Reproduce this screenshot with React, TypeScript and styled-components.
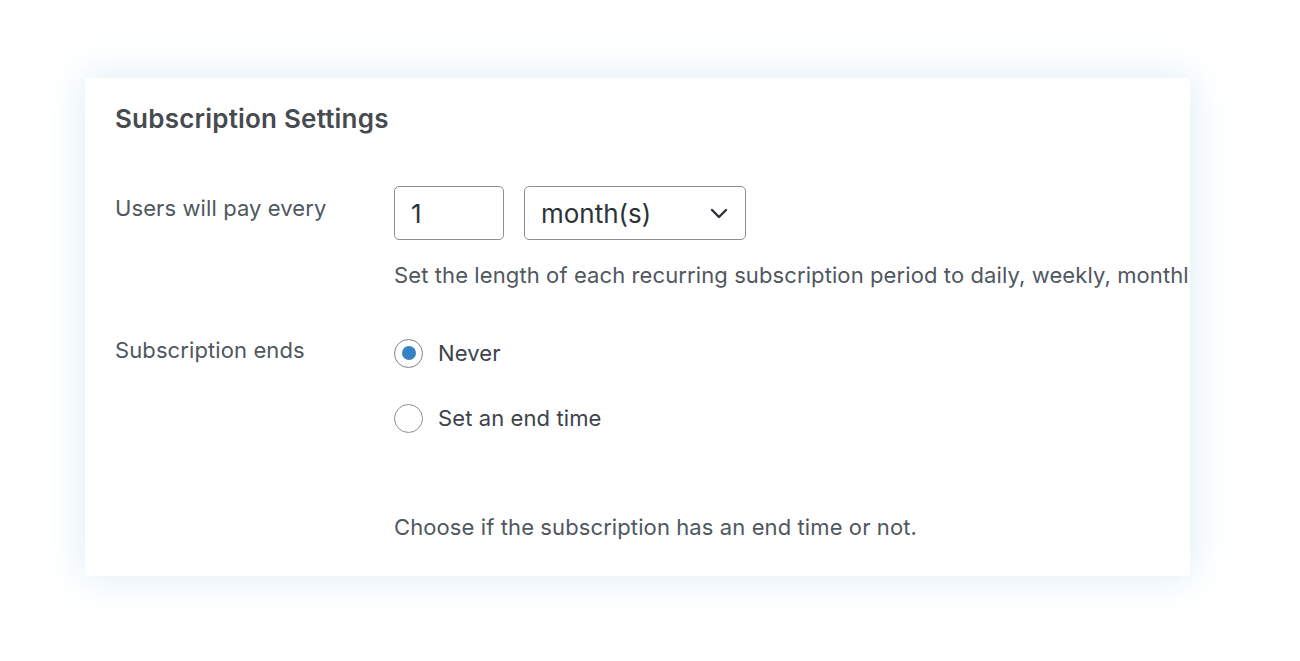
import styled, { createGlobalStyle } from "styled-components";

const Global = createGlobalStyle`
    html, body {
        margin: 0;
        padding: 0;
        background: #ffffff;
    }
    body {
        font-family: Inter, "Open Sans", "Liberation Sans", sans-serif;
        color: #3c434a;
    }
`;

const Page = styled.div`
    width: 1300px;
    height: 661px;
    padding: 78px 0 0 85px;
    box-sizing: border-box;
`;

const Card = styled.section`
    width: 1105px;
    height: 498px;
    box-sizing: border-box;
    background: #fff;
    padding: 23px 0 0 30px;
    overflow: hidden;
    box-shadow: 0 0 36px rgba(120, 190, 220, 0.28);
`;

const Title = styled.h2`
    margin: 0 0 49px;
    font-size: 26px;
    line-height: 36px;
    font-weight: 600;
    letter-spacing: 0.2px;
    color: #474b50;
`;

const Row = styled.div`
    display: grid;
    grid-template-columns: 279px 1fr;
    margin-bottom: 45px;
`;

const Label = styled.div<{ $top: number }>`
    font-size: 22px;
    line-height: 30px;
    letter-spacing: 0.1px;
    color: #50575e;
    padding-top: ${(p) => p.$top}px;
    white-space: nowrap;
`;

const Field = styled.div<{ $top?: number }>`
    display: flex;
    flex-direction: column;
    min-width: 0;
    padding-top: ${(p) => p.$top ?? 0}px;
`;

const Controls = styled.div`
    display: flex;
    gap: 20px;
`;

const NumberInput = styled.div`
    width: 110px;
    height: 54px;
    box-sizing: border-box;
    border: 1px solid #8c8f94;
    border-radius: 5px;
    padding: 0 16px;
    display: flex;
    align-items: center;
    font-size: 26px;
    color: #2c3338;
`;

const Select = styled.div`
    width: 222px;
    height: 54px;
    box-sizing: border-box;
    border: 1px solid #8c8f94;
    border-radius: 5px;
    padding: 0 14px 0 16px;
    display: flex;
    align-items: center;
    justify-content: space-between;
    font-size: 26px;
    color: #2c3338;
`;

const Help = styled.p<{ $top: number }>`
    margin: ${(p) => p.$top}px 0 0;
    font-size: 22px;
    line-height: 30px;
    letter-spacing: 0.1px;
    color: #50575e;
    white-space: nowrap;
`;

const RadioList = styled.div`
    display: flex;
    flex-direction: column;
    gap: 35px;
`;

const RadioItem = styled.label`
    display: flex;
    align-items: center;
    gap: 15px;
    font-size: 22px;
    line-height: 30px;
    letter-spacing: 0.1px;
    color: #3c434a;
`;

const RadioCircle = styled.span<{ $checked?: boolean }>`
    width: 29px;
    height: 29px;
    box-sizing: border-box;
    border-radius: 50%;
    border: 1.5px solid ${(p) => (p.$checked ? "#7e8288" : "#8c8f94")};
    display: flex;
    align-items: center;
    justify-content: center;
    background: #fff;

    &::after {
        content: "";
        width: 14px;
        height: 14px;
        border-radius: 50%;
        background: ${(p) => (p.$checked ? "#3582c4" : "transparent")};
    }
`;

function Chevron() {
    return (
        <svg width="24" height="24" viewBox="0 0 24 24" fill="none">
            <path d="M5 9l7 7 7-7" stroke="#2c3338" strokeWidth="2.4" strokeLinecap="round" strokeLinejoin="round" />
        </svg>
    );
}

export default function App() {
    return (
        <>
            <Global />
            <Page>
                <Card>
                    <Title>Subscription Settings</Title>
                    <Row>
                        <Label $top={7}>Users will pay every</Label>
                        <Field>
                            <Controls>
                                <NumberInput>1</NumberInput>
                                <Select>
                                    month(s)
                                    <Chevron />
                                </Select>
                            </Controls>
                            <Help $top={20}>
                                Set the length of each recurring subscription period to daily, weekly, monthly or annually.
                            </Help>
                        </Field>
                    </Row>
                    <Row>
                        <Label $top={0}>Subscription ends</Label>
                        <Field $top={3}>
                            <RadioList>
                                <RadioItem>
                                    <RadioCircle $checked />
                                    Never
                                </RadioItem>
                                <RadioItem>
                                    <RadioCircle />
                                    Set an end time
                                </RadioItem>
                            </RadioList>
                            <Help $top={79}>Choose if the subscription has an end time or not.</Help>
                        </Field>
                    </Row>
                </Card>
            </Page>
        </>
    );
}
